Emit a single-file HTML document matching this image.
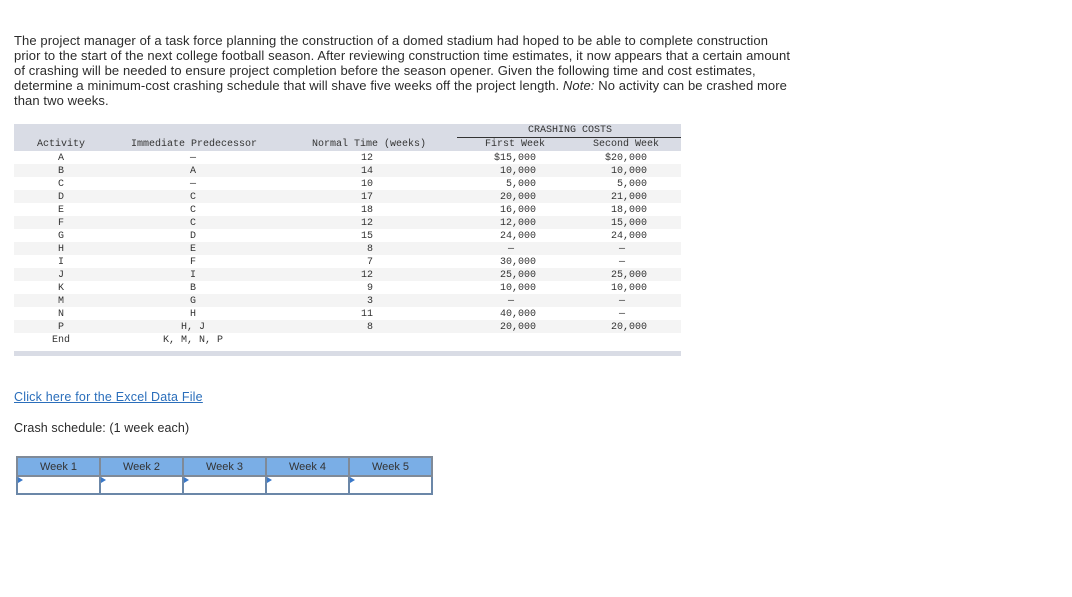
<!DOCTYPE html>
<html><head><meta charset="utf-8"><style>
body{margin:0;width:1072px;height:597px;background:#fff;position:relative;font-family:"Liberation Sans",sans-serif;color:#2b2b2b;overflow:hidden}
.p{position:absolute;left:14px;top:33px;font-size:13px;letter-spacing:0.1px;line-height:15px;white-space:nowrap}
.tb{position:absolute;left:14px;top:124px;width:667px;height:232px;font-family:"Liberation Mono",monospace;font-size:10px;color:#333}
.hd{position:absolute;left:0;top:0;width:667px;height:27px;background:#d9dce5}
.bt{position:absolute;left:0;top:227px;width:667px;height:5px;background:#d9dce5}
.r{position:absolute;left:0;width:667px;height:13px;line-height:15px}
.r span,.hd span{position:absolute;white-space:nowrap}
.c1{left:17px;width:60px;text-align:center}
.c2{left:119px;width:120px;text-align:center}
.c3{left:300px;width:59px;text-align:right}
.c4{left:460px;width:62px;text-align:right}
.c5{left:570px;width:63px;text-align:right}
a{position:absolute;left:14px;top:390px;font-size:12.5px;letter-spacing:0.2px;color:#2a6ebb;text-decoration:underline}
.cs{position:absolute;left:14px;top:421px;font-size:12.5px;letter-spacing:0.1px}
.wk{position:absolute;left:16px;top:456px;border-collapse:collapse;font-size:11px}
.wk td{border:2px solid #6b87a8;width:81px;padding:0;text-align:center}
.wk tr.h td{background:#7aaee6;height:17px;border-color:#7f8a98;color:#333}
.wk tr.i td{background:#fff;height:16px;position:relative}
.wk tr.i td:before{content:"";position:absolute;left:0;top:0;border-left:5px solid #3a78c8;border-top:3px solid transparent;border-bottom:3px solid transparent}
</style></head><body>
<div class="p">The project manager of a task force planning the construction of a domed stadium had hoped to be able to complete construction<br>prior to the start of the next college football season. After reviewing construction time estimates, it now appears that a certain amount<br>of crashing will be needed to ensure project completion before the season opener. Given the following time and cost estimates,<br>determine a minimum-cost crashing schedule that will shave five weeks off the project length. <i>Note:</i> No activity can be crashed more<br>than two weeks.</div>
<div class="tb">
<div class="hd">
<span style="left:480px;width:152px;text-align:center;top:1px">CRASHING COSTS</span>
<div style="position:absolute;left:443px;top:13px;width:224px;height:1px;background:#333"></div>
<span class="c1" style="top:15px">Activity</span>
<span style="left:117px;top:15px">Immediate Predecessor</span>
<span style="left:298px;top:15px">Normal Time (weeks)</span>
<span style="left:471px;top:15px">First Week</span>
<span style="left:579px;top:15px">Second Week</span>
</div>
<div class="r" style="top:27px;background:#fff"><span class="c1">A</span><span class="c2">—</span><span class="c3">12</span><span class="c4">$15,000</span><span class="c5">$20,000</span></div>
<div class="r" style="top:40px;background:#f4f4f4"><span class="c1">B</span><span class="c2">A</span><span class="c3">14</span><span class="c4">10,000</span><span class="c5">10,000</span></div>
<div class="r" style="top:53px;background:#fff"><span class="c1">C</span><span class="c2">—</span><span class="c3">10</span><span class="c4">5,000</span><span class="c5">5,000</span></div>
<div class="r" style="top:66px;background:#f4f4f4"><span class="c1">D</span><span class="c2">C</span><span class="c3">17</span><span class="c4">20,000</span><span class="c5">21,000</span></div>
<div class="r" style="top:79px;background:#fff"><span class="c1">E</span><span class="c2">C</span><span class="c3">18</span><span class="c4">16,000</span><span class="c5">18,000</span></div>
<div class="r" style="top:92px;background:#f4f4f4"><span class="c1">F</span><span class="c2">C</span><span class="c3">12</span><span class="c4">12,000</span><span class="c5">15,000</span></div>
<div class="r" style="top:105px;background:#fff"><span class="c1">G</span><span class="c2">D</span><span class="c3">15</span><span class="c4">24,000</span><span class="c5">24,000</span></div>
<div class="r" style="top:118px;background:#f4f4f4"><span class="c1">H</span><span class="c2">E</span><span class="c3">8</span><span class="c4" style="text-align:center;width:50px;left:472px">—</span><span class="c5" style="text-align:center;width:50px;left:583px">—</span></div>
<div class="r" style="top:131px;background:#fff"><span class="c1">I</span><span class="c2">F</span><span class="c3">7</span><span class="c4">30,000</span><span class="c5" style="text-align:center;width:50px;left:583px">—</span></div>
<div class="r" style="top:144px;background:#f4f4f4"><span class="c1">J</span><span class="c2">I</span><span class="c3">12</span><span class="c4">25,000</span><span class="c5">25,000</span></div>
<div class="r" style="top:157px;background:#fff"><span class="c1">K</span><span class="c2">B</span><span class="c3">9</span><span class="c4">10,000</span><span class="c5">10,000</span></div>
<div class="r" style="top:170px;background:#f4f4f4"><span class="c1">M</span><span class="c2">G</span><span class="c3">3</span><span class="c4" style="text-align:center;width:50px;left:472px">—</span><span class="c5" style="text-align:center;width:50px;left:583px">—</span></div>
<div class="r" style="top:183px;background:#fff"><span class="c1">N</span><span class="c2">H</span><span class="c3">11</span><span class="c4">40,000</span><span class="c5" style="text-align:center;width:50px;left:583px">—</span></div>
<div class="r" style="top:196px;background:#f4f4f4"><span class="c1">P</span><span class="c2">H, J</span><span class="c3">8</span><span class="c4">20,000</span><span class="c5">20,000</span></div>
<div class="r" style="top:209px;background:#fff"><span class="c1">End</span><span class="c2">K, M, N, P</span></div>
<div class="bt"></div>
</div>
<a>Click here for the Excel Data File</a>
<div class="cs">Crash schedule: (1 week each)</div>
<table class="wk"><tr class="h"><td>Week 1</td><td>Week 2</td><td>Week 3</td><td>Week 4</td><td>Week 5</td></tr>
<tr class="i"><td></td><td></td><td></td><td></td><td></td></tr></table>
</body></html>
